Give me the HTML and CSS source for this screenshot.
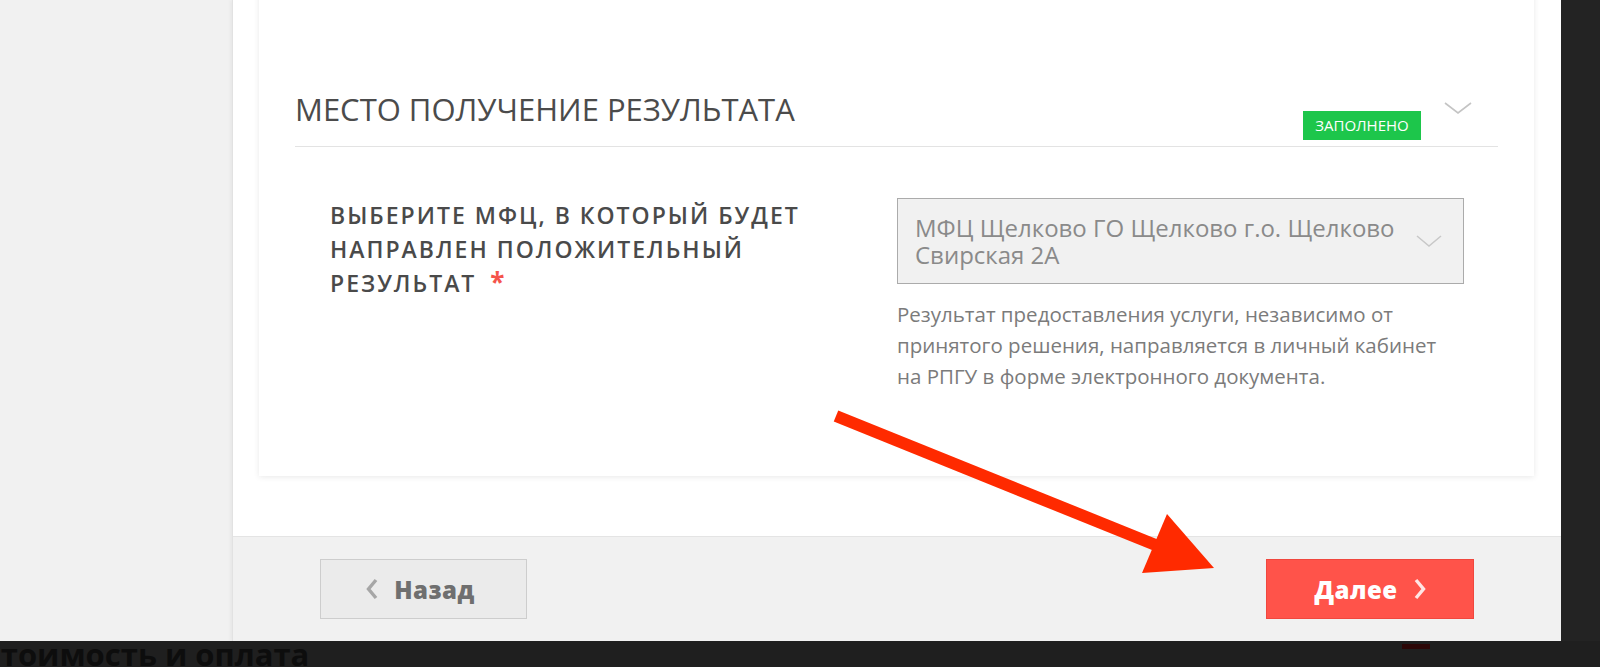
FILE: index.html
```html
<!DOCTYPE html>
<html lang="ru">
<head>
<meta charset="utf-8">
<title>Место получения результата</title>
<link rel="stylesheet" href="styles.css">
</head>
<body>
<div class="screen">
  <div class="top">
    <div class="side"></div>
    <div class="modal">
      <div class="modal-body">
        <div class="card">
          <div class="section-head">
            <h2 class="section-title">МЕСТО ПОЛУЧЕНИЕ РЕЗУЛЬТАТА</h2>
            <div class="head-right">
              <span class="badge">ЗАПОЛНЕНО</span>
              <svg class="head-chevron" width="28" height="12" viewBox="0 0 28 12"><polyline points="1,1 14,11 27,1" fill="none" stroke="#c4c4c4" stroke-width="1.6"/></svg>
            </div>
          </div>
          <div class="form-row">
            <div class="label-col">
              <div class="label">ВЫБЕРИТЕ МФЦ, В КОТОРЫЙ БУДЕТ НАПРАВЛЕН ПОЛОЖИТЕЛЬНЫЙ РЕЗУЛЬТАТ<span class="req">*</span></div>
            </div>
            <div class="field">
              <div class="select">
                <span class="select-text">МФЦ Щелково ГО Щелково г.о. Щелково Свирская 2А</span>
                <svg class="select-chevron" width="26" height="12" viewBox="0 0 26 12"><polyline points="1,1 13,11 25,1" fill="none" stroke="#c8c8c8" stroke-width="1.5"/></svg>
              </div>
              <p class="hint">Результат предоставления услуги, независимо от принятого решения, направляется в личный кабинет на РПГУ в форме электронного документа.</p>
            </div>
          </div>
        </div>
      </div>
      <div class="modal-footer">
        <button class="btn btn-back"><svg class="chev" width="12" height="22" viewBox="0 0 12 22"><polyline points="10,2 2.5,11 10,20" fill="none" stroke="#a6a6a6" stroke-width="3.4"/></svg><span>Назад</span></button>
        <button class="btn btn-next"><span>Далее</span><svg class="chev" width="12" height="22" viewBox="0 0 12 22"><polyline points="2,2 9.5,11 2,20" fill="none" stroke="rgba(255,255,255,0.85)" stroke-width="3.4"/></svg></button>
      </div>
    </div>
    <div class="dim"></div>
  </div>
  <div class="bottom">
    <span class="bottom-text">Стоимость и оплата</span>
    <span class="bottom-mark"></span>
  </div>
  <svg class="annotation" width="1600" height="667" viewBox="0 0 1600 667">
    <line x1="836" y1="416" x2="1158" y2="546" stroke="#ff2a00" stroke-width="12"/>
    <polygon points="1167,514 1142,573 1214,568" fill="#ff2a00"/>
  </svg>
</div>
</body>
</html>
```

FILE: styles.css
```css
* { box-sizing: border-box; }
html, body { margin: 0; padding: 0; }
body {
  width: 1600px;
  height: 667px;
  overflow: hidden;
  background: #232323;
  font-family: "Open Sans", "Noto Sans", sans-serif;
}
.screen {
  position: relative;
  display: flex;
  flex-direction: column;
  width: 1600px;
  height: 667px;
}
.top {
  display: flex;
  height: 641px;
}
.side {
  width: 232px;
  background: #f1f1f1;
}
.modal {
  width: 1329px;
  display: flex;
  flex-direction: column;
  background: #fff;
  border-left: 1px solid #e2e2e2;
  box-shadow: -2px 0 3px rgba(0,0,0,0.04);
}
.dim {
  flex: 1;
  background: #232323;
}
.modal-body {
  height: 536px;
  padding: 0 26px;
  overflow: hidden;
}
.card {
  margin-top: -20px;
  width: 1275px;
  padding: 0 36px 84px 36px;
  background: #fff;
  box-shadow: 0 1px 6px rgba(0,0,0,0.09);
}
.section-head {
  display: flex;
  align-items: flex-start;
  padding-top: 107px;
  padding-bottom: 6px;
  border-bottom: 1px solid #e3e3e3;
}
.section-title {
  margin: 0;
  font-size: 31px;
  line-height: 44px;
  font-weight: 400;
  color: #4b4b4b;
}
.head-right {
  margin-left: auto;
  display: flex;
  align-items: flex-start;
}
.badge {
  margin-top: 24px;
  width: 118px;
  height: 29px;
  line-height: 29px;
  text-align: center;
  background: #1dc64b;
  color: #fff;
  font-size: 15px;
}
.head-chevron {
  display: block;
  margin-top: 15px;
  margin-left: 23px;
  margin-right: 26px;
}
.form-row {
  display: flex;
  margin-top: 51px;
  padding-left: 35px;
}
.label-col {
  width: 567px;
}
.label {
  width: 520px;
  font-size: 23px;
  line-height: 34px;
  font-weight: 600;
  letter-spacing: 2px;
  color: #4a4a4a;
}
.req {
  display: inline-block;
  margin-left: 14px;
  color: #f5544b;
  font-size: 26px;
  font-weight: 700;
  line-height: 20px;
  letter-spacing: 0;
}
.field {
  width: 567px;
}
.select {
  display: flex;
  align-items: center;
  height: 86px;
  padding: 0 21px 0 17px;
  background: #f1f1f1;
  border: 1px solid #ababab;
}
.select-text {
  flex: 1;
  padding-right: 4px;
  font-size: 24px;
  line-height: 27px;
  color: #8a8a8a;
}
.select-chevron { display: block; }
.hint {
  margin: 15px 0 0 0;
  padding-right: 16px;
  font-size: 20.5px;
  line-height: 31px;
  color: #7b7b7b;
}
.modal-footer {
  flex: 1;
  display: flex;
  justify-content: space-between;
  align-items: flex-start;
  padding: 22px 87px 0 87px;
  background: #f1f1f1;
  border-top: 1px solid #e4e4e4;
}
.btn {
  display: flex;
  align-items: center;
  justify-content: center;
  gap: 16px;
  height: 60px;
  font-family: "Open Sans", "Noto Sans", sans-serif;
  font-size: 24px;
  font-weight: 800;
  letter-spacing: 0.5px;
  padding: 0;
  cursor: pointer;
}
.btn-back {
  width: 207px;
  padding-right: 6px;
  background: #ebebeb;
  border: 1px solid #cdcdcd;
  color: #6f6f6f;
}
.btn-next {
  width: 208px;
  background: #ff534a;
  border: 1px solid #f0473e;
  color: #fff;
}
.chev { display: block; }
.bottom {
  display: flex;
  align-items: flex-start;
  height: 26px;
  padding-top: 6px;
  background: #1f1f1f;
  overflow: hidden;
}
.bottom-text {
  margin-left: -19px;
  font-size: 31px;
  line-height: 14px;
  font-weight: 700;
  color: #0d0d0d;
  white-space: nowrap;
}
.bottom-mark {
  margin-left: auto;
  margin-right: 170px;
  margin-top: -3px;
  width: 28px;
  height: 5px;
  background: #2c0707;
}
.annotation {
  position: absolute;
  left: 0;
  top: 0;
  pointer-events: none;
}
```
